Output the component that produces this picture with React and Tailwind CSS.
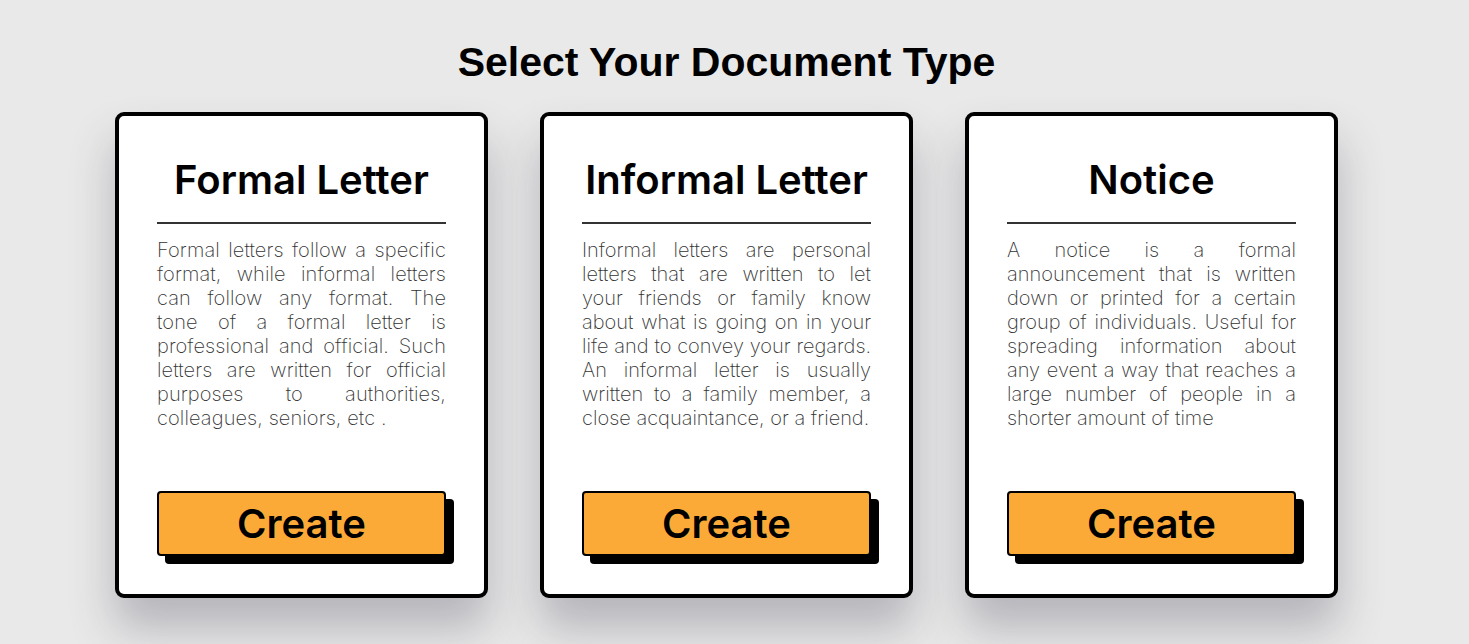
import React from 'react';

const docs = [
    {
        title: 'Formal Letter',
        text: 'Formal letters follow a specific format, while informal letters can follow any format. The tone of a formal letter is professional and official. Such letters are written for official purposes to authorities, colleagues, seniors, etc .',
        spacing: 'tracking-[0.1px]',
    },
    {
        title: 'Informal Letter',
        text: 'Informal letters are personal letters that are written to let your friends or family know about what is going on in your life and to convey your regards. An informal letter is usually written to a family member, a close acquaintance, or a friend.',
        spacing: 'tracking-normal',
    },
    {
        title: 'Notice',
        text: 'A notice is a formal announcement that is written down or printed for a certain group of individuals. Useful for spreading information about any event a way that reaches a large number of people in a shorter amount of time',
        spacing: 'tracking-normal',
    },
];

const DocCard = ({ title, text, spacing }) => (
    <div className="w-[373px] h-[486px] bg-white border-4 border-black rounded-[9px] px-[38px] pt-[38px] pb-[38px] flex flex-col shadow-[0_30px_45px_rgba(60,60,80,0.3)]">
        <h2 className="text-center text-[40px] leading-[52px] font-semibold text-black font-['Inter',sans-serif]">
            {title}
        </h2>
        <div className="mt-[16px] h-[2px] bg-black/80" />
        <p className={`mt-[14px] text-[20px] leading-[24px] font-extralight ${spacing} text-[#333] text-justify font-['Inter',sans-serif]`}>
            {text}
        </p>
        <div className="mt-auto relative">
            <div className="absolute left-[8px] top-[8px] w-full h-[65px] bg-black rounded-[4px]" />
            <button className="relative w-full h-[65px] bg-[#fbaa38] border-2 border-black rounded-[4px] text-[40px] font-semibold text-black font-['Inter',sans-serif]">
                Create
            </button>
        </div>
    </div>
);

const App = () => {
    return (
        <div className="min-h-screen bg-[#e9e9e9] flex flex-col items-center pt-[38px] pr-[16px]">
            <h1 className="text-[41px] leading-[48px] font-bold text-black font-['Liberation_Sans',Arial,sans-serif]">
                Select Your Document Type
            </h1>
            <div className="mt-[26px] flex gap-[52px]">
                {docs.map((d) => (
                    <DocCard key={d.title} title={d.title} text={d.text} spacing={d.spacing} />
                ))}
            </div>
        </div>
    );
};

export default App;
